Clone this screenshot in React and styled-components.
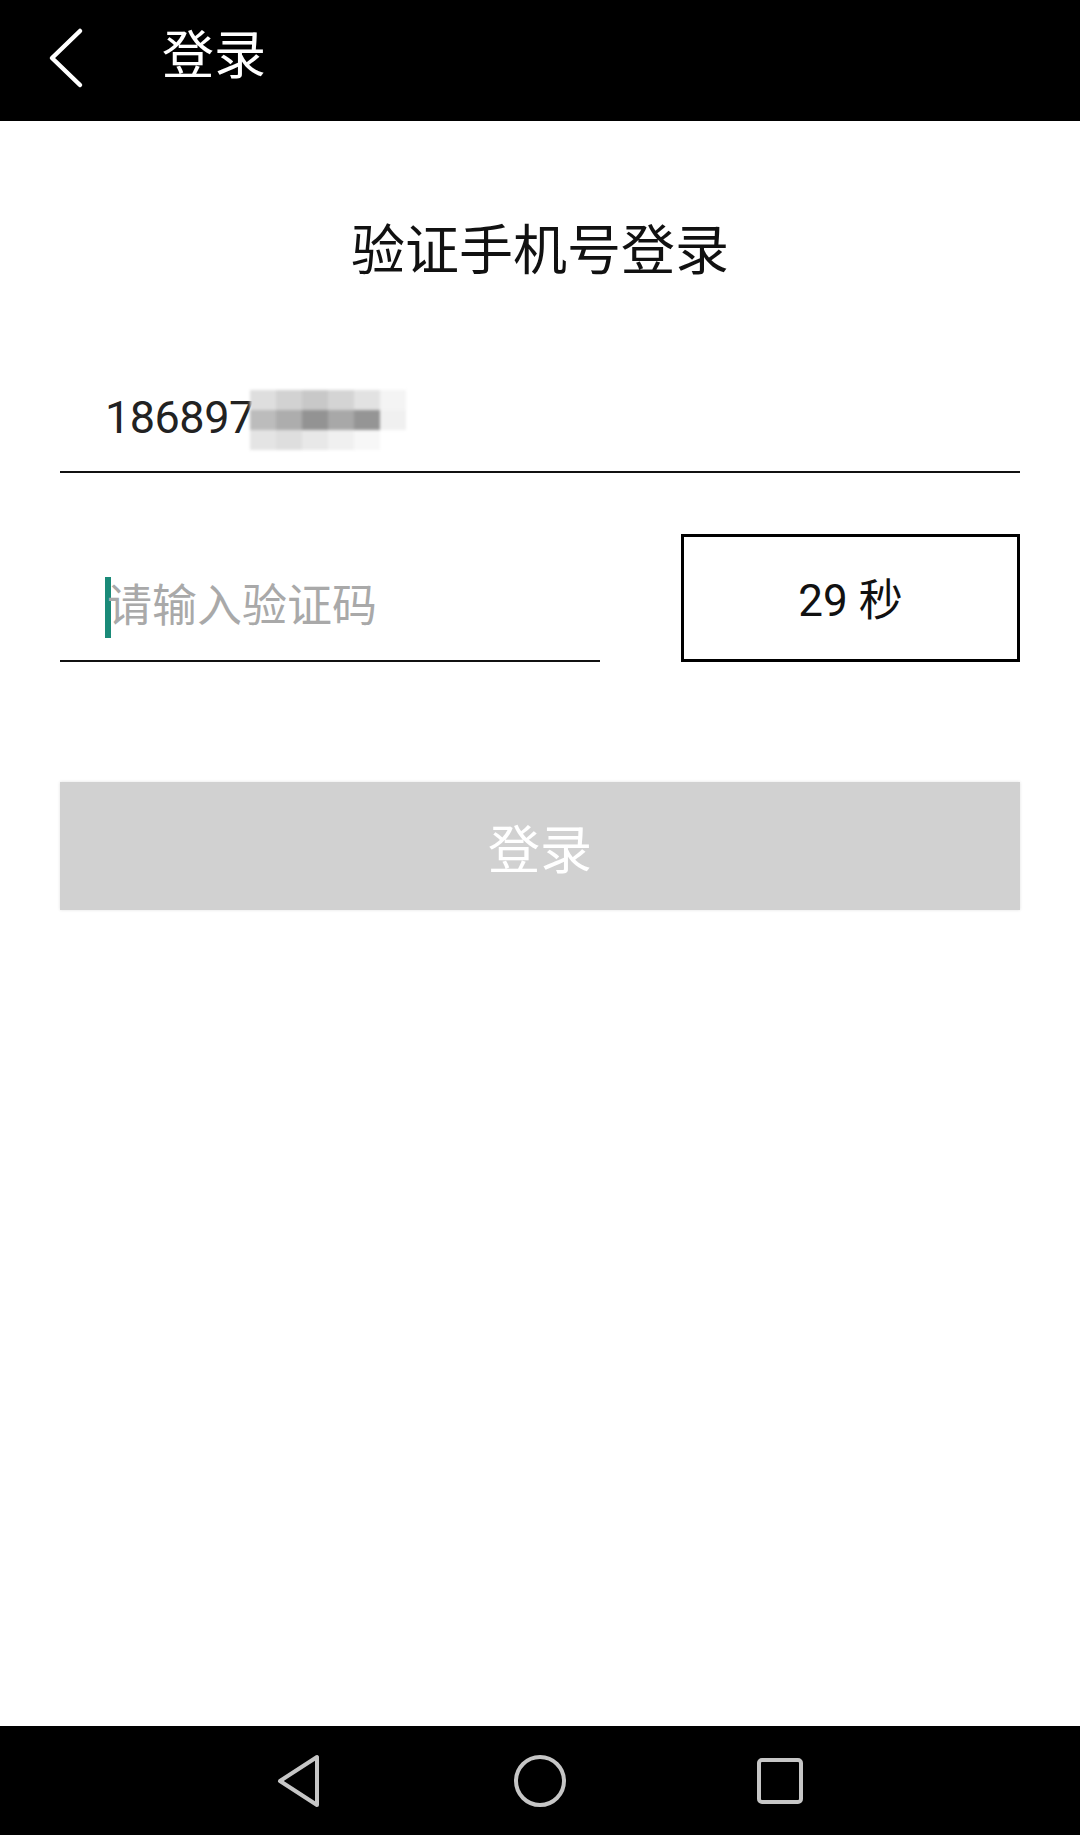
import styled, { createGlobalStyle } from "styled-components";

const GlobalStyle = createGlobalStyle`
  html, body {
    margin: 0;
    padding: 0;
    background: #ffffff;
  }
  body {
    font-family: Roboto, "Noto Sans CJK SC", sans-serif;
  }
`;

// blurred-out part of the phone number
const mosaic = [
  ["#dedede", "#d2d2d2", "#c8c8c8", "#d4d4d4", "#e2e2e2", "#f4f4f4"],
  ["#bcbcbc", "#adadad", "#939393", "#a8a8a8", "#959595", "#f0f0f0"],
  ["#e4e4e4", "#dedede", "#e8e8e8", "#f0f0f0", "#f7f7f7", "#ffffff"],
];

export default function App() {
  return (
    <Page>
      <GlobalStyle />
      <Header>
        <BackButton>
          <svg width="40" height="62" viewBox="0 0 40 62">
            <path
              d="M34 4 L6 31 L34 58"
              fill="none"
              stroke="#ffffff"
              strokeWidth="4.5"
              strokeLinecap="round"
              strokeLinejoin="round"
            />
          </svg>
        </BackButton>
        <HeaderTitle>登录</HeaderTitle>
      </Header>

      <Content>
        <Title>验证手机号登录</Title>

        <PhoneField>
          <PhoneText>186897</PhoneText>
          <Mosaic>
            {mosaic.flat().map((c, i) => (
              <Cell key={i} style={{ background: c }} />
            ))}
          </Mosaic>
        </PhoneField>

        <CodeRow>
          <CodeField>
            <Cursor />
            <Placeholder>请输入验证码</Placeholder>
          </CodeField>
          <CountdownBox>29 秒</CountdownBox>
        </CodeRow>

        <LoginButton>登录</LoginButton>
      </Content>

      <NavBar>
        <NavIcon>
          <svg width="50" height="56" viewBox="0 0 50 56">
            <path
              d="M42 4 L42 52 L5 28 Z"
              fill="none"
              stroke="#c6c6c6"
              strokeWidth="4"
              strokeLinejoin="round"
            />
          </svg>
        </NavIcon>
        <NavIcon>
          <svg width="54" height="54" viewBox="0 0 54 54">
            <circle cx="27" cy="27" r="24" fill="none" stroke="#c6c6c6" strokeWidth="4" />
          </svg>
        </NavIcon>
        <NavIcon>
          <svg width="48" height="48" viewBox="0 0 48 48">
            <rect
              x="3"
              y="3"
              width="42"
              height="42"
              rx="3"
              fill="none"
              stroke="#c6c6c6"
              strokeWidth="4"
            />
          </svg>
        </NavIcon>
      </NavBar>
    </Page>
  );
}

const Page = styled.div`
  width: 1080px;
  height: 1835px;
  display: flex;
  flex-direction: column;
  background: #ffffff;
`;

const Header = styled.div`
  height: 121px;
  background: #000000;
  display: flex;
  align-items: center;
  padding-left: 46px;
  flex-shrink: 0;
`;

const BackButton = styled.div`
  width: 40px;
  height: 62px;
  display: flex;
  align-items: center;
  margin-top: -6px;
`;

const HeaderTitle = styled.div`
  margin-left: 76px;
  margin-top: -8px;
  color: #ffffff;
  font-size: 52px;
  line-height: 1;
`;

const Content = styled.div`
  flex: 1;
  display: flex;
  flex-direction: column;
  padding: 0 60px;
`;

const Title = styled.div`
  margin-top: 104px;
  text-align: center;
  font-size: 54px;
  line-height: 54px;
  color: #111111;
`;

const PhoneField = styled.div`
  margin-top: 109px;
  display: flex;
  align-items: center;
  height: 60px;
  padding: 0 0 23px 45px;
  border-bottom: 2px solid #111111;
`;

const PhoneText = styled.div`
  font-size: 45px;
  line-height: 60px;
  color: #222222;
  letter-spacing: -0.5px;
`;

const Mosaic = styled.div`
  display: grid;
  grid-template-columns: repeat(6, 26px);
  grid-auto-rows: 20px;
  margin-left: -4px;
  margin-top: 4px;
  filter: blur(1.5px);
`;

const Cell = styled.div``;

const CodeRow = styled.div`
  margin-top: 61px;
  display: flex;
  align-items: flex-end;
  justify-content: space-between;
`;

const CodeField = styled.div`
  width: 495px;
  height: 62px;
  display: flex;
  align-items: center;
  padding: 0 0 22px 45px;
  border-bottom: 2px solid #111111;
`;

const Cursor = styled.div`
  width: 6px;
  height: 61px;
  background: #1a8a78;
  flex-shrink: 0;
`;

const Placeholder = styled.div`
  margin-left: -4px;
  font-size: 45px;
  line-height: 60px;
  color: #a9a9a9;
`;

const CountdownBox = styled.div`
  width: 339px;
  height: 128px;
  box-sizing: border-box;
  border: 3px solid #000000;
  display: flex;
  align-items: center;
  justify-content: center;
  font-size: 44px;
  color: #111111;
  padding-bottom: 2px;
`;

const LoginButton = styled.div`
  margin-top: 120px;
  height: 128px;
  background: #d1d1d1;
  box-shadow: 0 0 3px rgba(0, 0, 0, 0.12);
  color: #ffffff;
  font-size: 52px;
  display: flex;
  align-items: center;
  justify-content: center;
`;

const NavBar = styled.div`
  height: 109px;
  background: #000000;
  display: flex;
  align-items: center;
  justify-content: center;
  gap: 186px;
  flex-shrink: 0;
`;

const NavIcon = styled.div`
  width: 54px;
  display: flex;
  align-items: center;
  justify-content: center;
`;
